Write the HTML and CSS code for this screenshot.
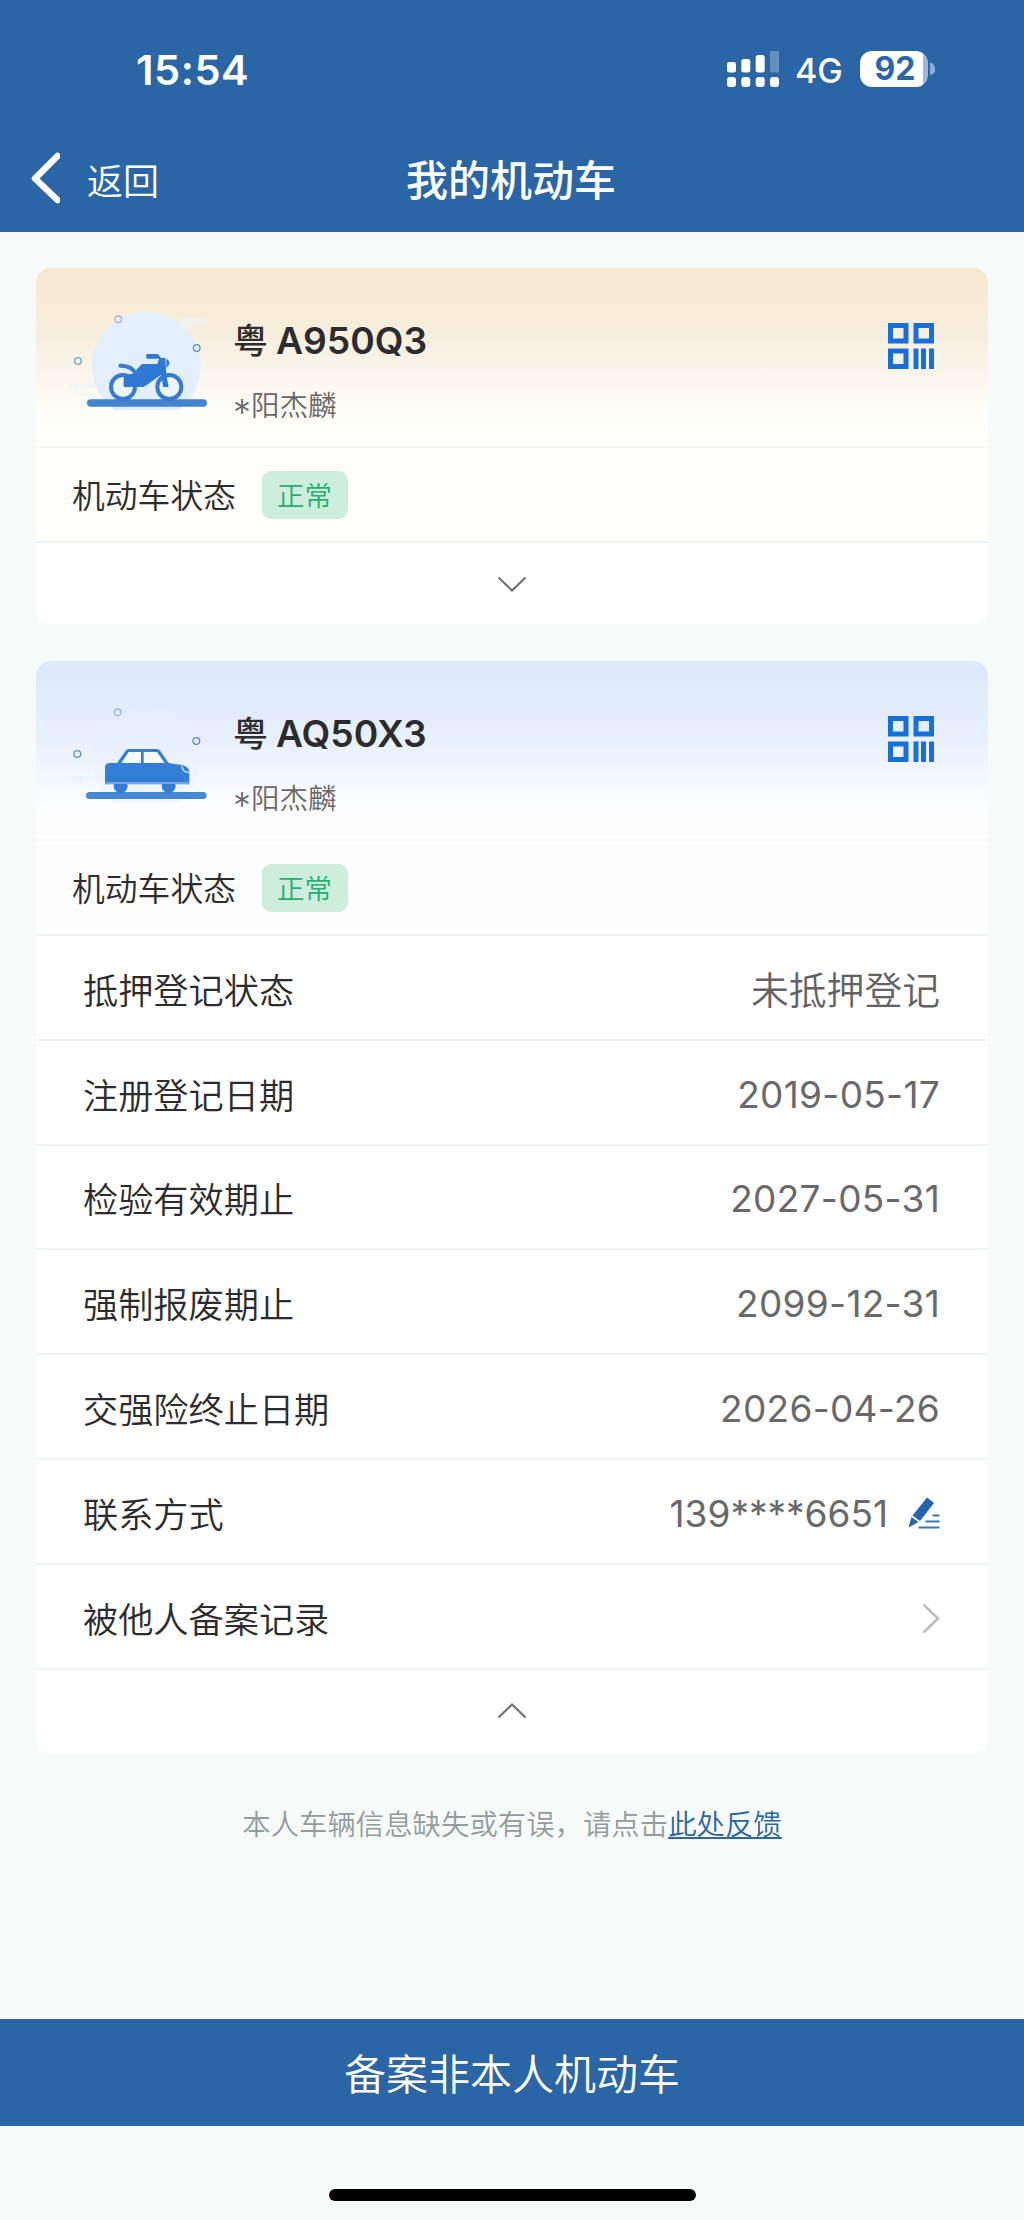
FILE: index.html
```html
<!DOCTYPE html>
<html lang="zh-CN">
<head>
<meta charset="utf-8">
<title>我的机动车</title>
<link rel="stylesheet" href="styles.css">
</head>
<body>
<svg class="defs" width="0" height="0">
  <symbol id="qr" viewBox="0 0 46 46">
    <path fill="none" stroke="currentColor" stroke-width="5" d="M2.5 2.5h15.5v15.5h-15.5zM28 2.5h15.5v15.5h-15.5zM2.5 28h15.5v15.5h-15.5z"/>
    <path fill="currentColor" d="M25.5 25.5h5v20.500h-5zM33 25.500h5v20.500h-5zM41 25.500h5v20.500h-5z"/>
  </symbol>
</svg>
<header class="top">
  <div class="status-bar">
    <span class="time">15:54</span>
    <div class="indicators">
      <svg class="signal" viewBox="0 0 52 36" width="52" height="36" fill="#fff">
        <rect x="0" y="11" width="9" height="10.500" rx="2.500"/><rect x="14.300" y="8" width="9" height="13.500" rx="2.500"/><rect x="28.700" y="4" width="9" height="17.500" rx="2.500"/><rect x="43" y="0" width="9" height="21.500" rx="1" opacity=".28"/>
        <rect x="0" y="26" width="9" height="10" rx="3"/><rect x="14.300" y="26" width="9" height="10" rx="3"/><rect x="28.700" y="26" width="9" height="10" rx="3"/><rect x="43" y="26" width="9" height="10" rx="3"/>
      </svg>
      <span class="network">4G</span>
      <span class="battery"><span class="battery-level">92</span></span>
    </div>
  </div>
  <nav class="nav">
    <a class="back">
      <svg viewBox="0 0 30 52" width="30" height="52" fill="none" stroke="#fff" stroke-width="6.500" stroke-linecap="round" stroke-linejoin="round"><path d="M27.500 4L5 26.500L27.500 48"/></svg>
      <span>返回</span>
    </a>
    <h1 class="title">我的机动车</h1>
  </nav>
</header>
<main class="content">
  <section class="card card-moto">
    <div class="summary">
      <div class="vehicle">
        <svg class="art" viewBox="129 168 441 312" width="147" height="104">
          <circle cx="379" cy="348" r="163" fill="#e4effd"/>
          <path d="M477 203h86v18h-44v16h-38zM140 403h92v12h-56v16h44v10h-30" fill="#edf3f8" opacity=".6"/>
          <rect x="201" y="448" width="360" height="22" rx="11" fill="#4383cf"/>
          <g fill="#eef5fc" stroke="#347bd2" stroke-width="12"><circle cx="309" cy="411" r="36"/><circle cx="448" cy="411" r="36"/></g>
          <path d="M301 347C323 346 340 355 350 374" fill="none" stroke="#347bd2" stroke-width="12" stroke-linecap="round"/>
          <path d="M349 359L366 342H412L417 326H379V312H414L423 324H436L439 374L446 411H429L424 374L371 411H311V382Q330 370 349 370Z" fill="#2f78d3"/>
          <path d="M439 325Q458 339 439 354Z" fill="#347bd2"/>
          <g fill="none" stroke-width="4"><circle cx="295" cy="208" r="10" stroke="#a9b4da"/><circle cx="174" cy="333" r="10" stroke="#6ba0cb"/><circle cx="530" cy="294" r="10" stroke="#5392c8"/></g>
        </svg>
        <div class="identity">
          <h2 class="plate"><span class="province">粤</span><span class="number">A950Q3</span></h2>
          <p class="owner"><span class="mask">*</span>阳杰麟</p>
        </div>
        <svg class="qr"><use href="#qr"/></svg>
      </div>
      <div class="state"><span class="state-label">机动车状态</span><span class="badge">正常</span></div>
    </div>
    <button class="toggle"><svg viewBox="0 0 30 16" width="30" height="16"><path d="M1.500 1.500L15 14.500L28.500 1.500"/></svg></button>
  </section>
  <section class="card card-car">
    <div class="summary">
      <div class="vehicle">
        <svg class="art" viewBox="129 177 441 312" width="147" height="104">
          <circle cx="379" cy="357" r="163" fill="#e6f0fd" opacity=".3"/>
          <path d="M140 408h92v12h-44v16h-18" fill="#e4eefb" opacity=".4"/>
          <rect x="198" y="456" width="362" height="21" rx="10.500" fill="#4788d4"/>
          <circle cx="302" cy="438" r="21" fill="#347dd2"/><circle cx="446" cy="438" r="21" fill="#347dd2"/>
          <path d="M255 433V380Q256 370 270 369H291L317 332Q320 327 327 327H410Q417 327 421 333L446 369L485 375Q508 380 508 397V433Z" fill="#347fd6"/>
          <path d="M304 369L326 336H363V369ZM371 336H411L434 369H371Z" fill="#f5faff"/>
          <path d="M255 429H508" stroke="#a9cdf5" stroke-width="3"/>
          <path d="M486 378Q486 397 507 397" fill="none" stroke="#cce3fa" stroke-width="4"/>
          <g fill="none" stroke-width="4"><circle cx="293" cy="217" r="10" stroke="#a3b8dd"/><circle cx="172" cy="342" r="10" stroke="#5794b8"/><circle cx="529" cy="303" r="10" stroke="#5290cf"/></g>
        </svg>
        <div class="identity">
          <h2 class="plate"><span class="province">粤</span><span class="number">AQ50X3</span></h2>
          <p class="owner"><span class="mask">*</span>阳杰麟</p>
        </div>
        <svg class="qr"><use href="#qr"/></svg>
      </div>
      <div class="state"><span class="state-label">机动车状态</span><span class="badge">正常</span></div>
    </div>
    <dl class="details">
      <div class="row"><dt>抵押登记状态</dt><dd class="cjk">未抵押登记</dd></div>
      <div class="row"><dt>注册登记日期</dt><dd class="date">2019-05-17</dd></div>
      <div class="row"><dt>检验有效期止</dt><dd class="date">2027-05-31</dd></div>
      <div class="row"><dt>强制报废期止</dt><dd class="date">2099-12-31</dd></div>
      <div class="row"><dt>交强险终止日期</dt><dd class="date">2026-04-26</dd></div>
      <div class="row"><dt>联系方式</dt><dd class="phone"><span>139****6651</span>
        <svg viewBox="0 0 32 32" width="32" height="32"><path d="M19 0.500L26 6L12 24L4.500 18.500Z" fill="#2364ae"/><path d="M3.500 20L10.500 25L0.500 30.500Z" fill="#2364ae"/><path d="M24.500 18.500H31.500M17.500 24.500H31.500M10.500 30.500H31.500" stroke="#3d78b3" stroke-width="1.800"/></svg></dd></div>
      <div class="row"><dt>被他人备案记录</dt><dd><svg class="arrow" viewBox="0 0 18 31" width="18" height="31"><path d="M1.500 1.500L16 15.500L1.500 29.500"/></svg></dd></div>
    </dl>
    <button class="toggle"><svg viewBox="0 0 30 16" width="30" height="16"><path d="M1.500 14.500L15 1.500L28.500 14.500"/></svg></button>
  </section>
  <p class="feedback">本人车辆信息缺失或有误，请点击<a>此处反馈</a></p>
</main>
<footer class="bottom">
  <button class="submit">备案非本人机动车</button>
  <div class="home-indicator"></div>
</footer>
</body>
</html>
```
FILE: styles.css
```css
* { box-sizing: border-box; }
body, h1, h2, p, dl, dd { margin: 0; }
body {
  width: 1024px;
  height: 2220px;
  display: flex;
  flex-direction: column;
  background: #f6fbfa;
  color: #2c2c2e;
  font-family: Inter, "Noto Sans CJK SC", sans-serif;
}
.defs { display: none; }
button { border: 0; padding: 0; margin: 0; font-family: inherit; }

.top { height: 232px; background: #2a66a6; color: #fff; }
.status-bar { height: 138px; padding: 0 96px 0 136px; display: flex; justify-content: space-between; align-items: center; }
.time { font-size: 41.500px; font-weight: 600; line-height: 50px; letter-spacing: 0.5px; padding-top: 1px; }
.indicators { display: flex; align-items: center; }
.network { width: 48px; margin: 3px 17px 0 16px; font-size: 34px; font-weight: 500; line-height: 36px; }
.battery { position: relative; width: 68px; height: 36px; border-radius: 12px; background: linear-gradient(90deg, #fff 63px, #9eb7dc 63px); }
.battery::after { content: ""; position: absolute; left: 70px; top: 12px; width: 5px; height: 12px; border-radius: 0 5px 5px 0; background: #85afdf; }
.battery-level { display: block; padding-left: 2px; text-align: center; color: #2a66a6; font-size: 32px; font-weight: 700; line-height: 36px; }
.nav { height: 94px; padding: 0 30px; display: grid; grid-template-columns: 1fr auto 1fr; align-items: center; }
.back { display: flex; align-items: center; gap: 27px; font-size: 36px; font-weight: 350; line-height: 50px; padding-bottom: 6px; }
.back svg { margin-top: -9px; }
.title { font-size: 42px; font-weight: 500; line-height: 60px; padding: 0 2px 8px 0; }

.content { height: 1787px; padding: 36px 36px 0; }
.card { border-radius: 15px; overflow: hidden; background: #fff; margin-bottom: 37px; }
.card-moto .summary { background: linear-gradient(180deg, #f5e9d2 0, #f7ecd7 50px, #f8f3e6 90px, #fdfaf5 130px, #fefefa 160px); }
.card-car .summary { background: linear-gradient(180deg, #dce9fb 0, #e3edfc 55px, #edf3fe 95px, #f7fafe 130px, #fdfdfe 155px); }
.vehicle { height: 180px; padding: 38px 54px 0 27px; display: flex; border-bottom: 2px solid #f6f7f5; }
.art { flex: none; }
.identity { flex: 1; padding: 2px 0 0 23px; }
.plate { height: 66px; display: flex; align-items: center; gap: 8px; font-size: 37.200px; font-weight: 600; line-height: 66px; }
.province { font-size: 35px; font-weight: 500; }
.owner { height: 64px; font-size: 28.500px; font-weight: 350; line-height: 64px; color: #6a6768; }
.mask { display: inline-block; font-size: 36px; font-weight: 300; line-height: 10px; vertical-align: -9px; }
.qr { width: 46px; height: 46px; margin-top: 17px; color: #1570dd; }
.state { height: 95px; padding-left: 36px; display: flex; align-items: center; font-size: 32.800px; font-weight: 350; border-bottom: 2px solid #f0f1f2; }
.state-label { padding-bottom: 3px; }
.badge { margin-left: 26px; width: 86px; height: 48px; padding: 1px 1px 0 0; border-radius: 9px; background: #cdeedd; color: #26af74; font-size: 27.500px; line-height: 48px; text-align: center; }
.toggle { width: 100%; height: 81px; display: flex; align-items: center; justify-content: center; background: #fff; }
.toggle svg { fill: none; stroke: #707274; stroke-width: 2.200; }
.card-car .toggle { height: 83px; }
.row { height: 104.800px; padding: 0 48px 0 47px; display: flex; align-items: center; justify-content: space-between; border-bottom: 2px solid #f1f2f3; }
.row dt { font-size: 35.200px; font-weight: 350; padding-top: 2px; }
.row dd { font-size: 37px; font-weight: 400; color: #69696b; padding-top: 4px; }
.row dd.cjk { font-size: 37.800px; font-weight: 350; color: #626264; padding-top: 0; }
.row dd.date { letter-spacing: 0.3px; }
.phone { display: flex; align-items: center; gap: 20px; }
.arrow { display: block; fill: none; stroke: #bdbdbf; stroke-width: 2.600; }
.feedback { margin-top: 52px; text-align: center; font-size: 28.400px; font-weight: 350; line-height: 40px; color: #959b9b; }
.feedback a { color: #2a66a6; text-decoration: underline; text-decoration-thickness: 2px; text-underline-offset: 2px; }

.bottom { height: 201px; display: flex; flex-direction: column; align-items: center; }
.submit { width: 100%; height: 107px; padding-bottom: 3px; background: #2a66a6; color: #fff; font-size: 42px; font-weight: 350; }
.home-indicator { width: 367px; height: 12px; margin-top: 63px; border-radius: 6px; background: #000; }
```
